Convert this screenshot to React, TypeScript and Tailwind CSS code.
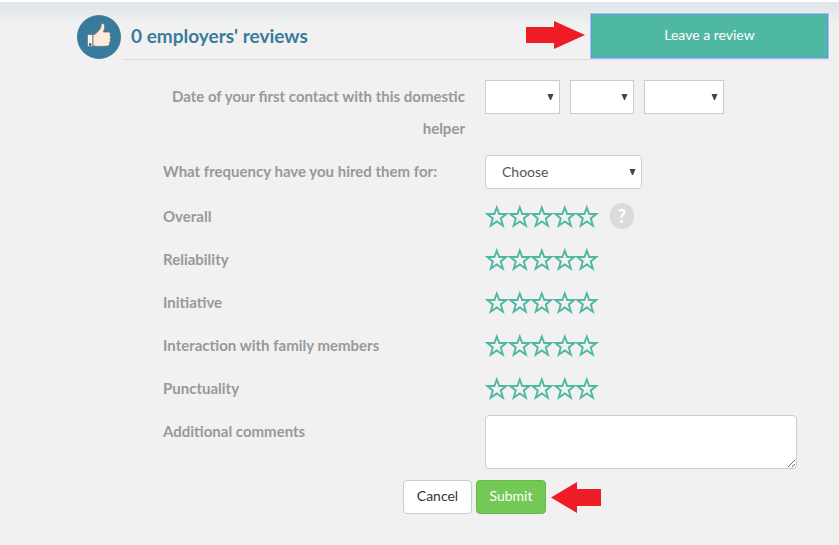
import { useState } from "react";
import type { ReactNode } from "react";

const ratings = ["Overall", "Reliability", "Initiative", "Interaction with family members", "Punctuality"];
const days = Array.from({ length: 31 }, (_, i) => String(i + 1));
const months = ["Jan", "Feb", "Mar", "Apr", "May", "Jun", "Jul", "Aug", "Sep", "Oct", "Nov", "Dec"];
const years = ["2014", "2015", "2016", "2017", "2018"];

function ThumbBadge() {
  return (
    <svg className="mt-px size-11 shrink-0" viewBox="0 0 44 44" aria-hidden="true">
      <circle cx="22" cy="22" r="22" fill="#397b9d" />
      <path d="M10.400 19.500h5.600v12h-5.600z" fill="#f4f4f2" stroke="#5c7582" strokeWidth="0.8" />
      <circle cx="13.200" cy="29.500" r="1.300" fill="#3c4a50" />
      <path
        d="M16 20c3.400-1 6.800-5 7.900-8 .5-1.400-.2-3.200 1.300-3.500 1.900-.3 2.700 1.800 2.500 3.800-.2 1.900-.9 3.200-1.300 4.700h4.900c2.200 0 2.600 2.400 1.400 3.500 1.500.8 1.500 2.800.2 3.700 1 1 .7 2.800-.5 3.400.6 1.300-.2 3.300-1.900 3.500-2.700.3-5.700.3-8.300.3-2.200 0-4.200-.2-6.200-.600z"
        fill="#fdebde"
        stroke="#6b6f6b"
        strokeWidth="0.8"
      />
    </svg>
  );
}

function Star({ filled }: { filled: boolean }) {
  return (
    <svg className="h-6 w-full overflow-visible" viewBox="0 0 22 24" aria-hidden="true">
      <path
        d="M11.500 3.500 13.900 10H21L15.500 14.400 17.600 21.700 11.500 17.400 5.400 21.700 7.500 14.400 2 10H9.100z"
        fill={filled ? "#4fb8a3" : "none"}
        stroke="#4fb8a3"
        strokeWidth="1.900"
      />
    </svg>
  );
}

function StarRating({ name, labelId }: { name: string; labelId: string }) {
  const [value, setValue] = useState(0);
  return (
    <div role="radiogroup" aria-labelledby={labelId} className="grid w-[113px] grid-cols-5">
      {[1, 2, 3, 4, 5].map((n) => (
        <label key={n} className="relative cursor-pointer">
          <input
            type="radio"
            name={name}
            value={n}
            aria-label={`${n} of 5`}
            checked={value === n}
            onChange={() => setValue(n)}
            className="sr-only"
          />
          <Star filled={n <= value} />
        </label>
      ))}
    </div>
  );
}

function Dropdown({
  id,
  label,
  width,
  placeholder = "",
  options,
}: {
  id: string;
  label?: string;
  width: string;
  placeholder?: string;
  options: string[];
}) {
  return (
    <div className={`relative h-[34px] ${width}`}>
      <select
        id={id}
        aria-label={label}
        defaultValue=""
        className={`size-full appearance-none border border-[#ccc] bg-white pl-4 text-sm text-[#555] ${placeholder ? "rounded" : ""}`}
      >
        <option value="">{placeholder}</option>
        {options.map((o) => (
          <option key={o}>{o}</option>
        ))}
      </select>
      <svg className="pointer-events-none absolute top-3.5 right-1.5 h-1.5 w-[7px]" viewBox="0 0 7 6" aria-hidden="true">
        <path d="M.5 0h6L4 6H3z" fill="#444" />
      </svg>
    </div>
  );
}

function Row({ label, children }: { label: ReactNode; children: ReactNode }) {
  return (
    <div className="grid grid-cols-[302px_minmax(0,1fr)] gap-x-5">
      {label}
      {children}
    </div>
  );
}

const labelStyle = "text-[15px] leading-8 font-bold text-[#999]";

export default function App() {
  return (
    <div className="min-h-screen border-t-2 border-white bg-[#f1f1f1] bg-[linear-gradient(to_bottom,#e0e4e8,#f1f1f1_24px)] font-['Lato','Liberation_Sans',sans-serif]">
      <header className="flex gap-0.5 pt-3 pr-[11px] pl-[77px]">
        <ThumbBadge />
        <div className="flex flex-1 items-start border-b border-[#dbdbdb] pl-2">
          <h2 className="text-[19px] leading-[44px] font-bold text-[#397b9d]">0 employers' reviews</h2>
          <svg className="mt-[7px] mr-1.5 ml-auto h-7 w-[59px]" viewBox="0 0 59 28" aria-hidden="true">
            <path d="M0 6h28V0l31 14-31 14v-6H0z" fill="#ee1c25" />
          </svg>
          <button
            type="button"
            className="mb-px h-11 w-[237px] border border-[#5b9dd9] bg-[#4fb8a3] pb-0.5 text-sm text-white outline-1 outline-[#a4c5ee]"
          >
            Leave a review
          </button>
        </div>
      </header>

      <form className="flex flex-col gap-[11px] pt-5 pr-[42px] pb-8 pl-[163px]" onSubmit={(e) => e.preventDefault()}>
        <Row
          label={
            <label htmlFor="day" className={`${labelStyle} text-right`}>
              Date of your first contact with this domestic helper
            </label>
          }
        >
          <div className="flex gap-2.5">
            <Dropdown id="day" width="w-[75px]" options={days} />
            <Dropdown id="month" label="Month" width="w-16" options={months} />
            <Dropdown id="year" label="Year" width="w-20" options={years} />
          </div>
        </Row>

        <Row
          label={
            <label htmlFor="frequency" className={labelStyle}>
              What frequency have you hired them for:
            </label>
          }
        >
          <Dropdown
            id="frequency"
            width="w-[157px]"
            placeholder="Choose"
            options={["Once", "Weekly", "Monthly", "Full time"]}
          />
        </Row>

        {ratings.map((name, i) => (
          <Row
            key={name}
            label={
              <span id={`rating-${i}`} className={labelStyle}>
                {name}
              </span>
            }
          >
            <div className="flex h-8 items-center gap-3">
              <StarRating name={name} labelId={`rating-${i}`} />
              {i === 0 && (
                <button
                  type="button"
                  aria-label="Help"
                  className="h-[26px] w-6 rounded-full bg-[#dbdbdb] text-lg leading-6 font-bold text-white"
                >
                  ?
                </button>
              )}
            </div>
          </Row>
        ))}

        <Row
          label={
            <label htmlFor="comments" className={labelStyle}>
              Additional comments
            </label>
          }
        >
          <textarea
            id="comments"
            className="block h-[54px] w-full rounded border border-[#ccc] bg-white px-3 py-1.5 text-sm text-[#555]"
          />
        </Row>

        <div className="flex items-center gap-1 pl-60">
          <button
            type="button"
            className="h-[34px] w-[69px] rounded border border-[#ccc] bg-white pb-0.5 text-sm text-[#333]"
          >
            Cancel
          </button>
          <button
            type="submit"
            className="h-[34px] w-[70px] rounded border border-[#62bd42] bg-[#74c856] pb-0.5 text-sm text-white"
          >
            Submit
          </button>
          <svg className="h-[31px] w-[51px]" viewBox="0 0 51 31" aria-hidden="true">
            <path d="M1 15.500 27 0v7h24v17H27v7z" fill="#ee1c25" />
          </svg>
        </div>
      </form>
    </div>
  );
}
